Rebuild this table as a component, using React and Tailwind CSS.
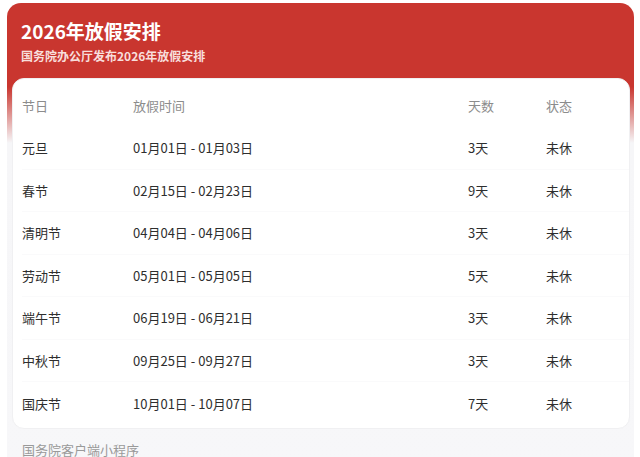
import React from "react";

const rows = [
  ["元旦", "01月01日 - 01月03日", "3天"],
  ["春节", "02月15日 - 02月23日", "9天"],
  ["清明节", "04月04日 - 04月06日", "3天"],
  ["劳动节", "05月01日 - 05月05日", "5天"],
  ["端午节", "06月19日 - 06月21日", "3天"],
  ["中秋节", "09月25日 - 09月27日", "3天"],
  ["国庆节", "10月01日 - 10月07日", "7天"],
];

export default function App() {
  return (
    <div
      className="w-[640px] h-[457px] overflow-hidden bg-white pt-[3px] pl-[7px] pr-[6px]"
      style={{ fontFamily: '"Noto Sans CJK SC", "Noto Sans", sans-serif' }}
    >
      <div className="h-[470px] rounded-[14px] bg-[linear-gradient(to_bottom,#c9362f_0px,#c9362f_84px,#f6f6f8_140px,#f7f7f9_100%)]">
        <div className="pl-[14px] pt-[16px]">
          <div className="text-[19px] leading-[24px] font-bold text-white">2026年放假安排</div>
          <div className="mt-[4px] text-[12px] leading-[18px] font-bold text-[#f8dedc]">
            国务院办公厅发布2026年放假安排
          </div>
        </div>
        <div className="mx-[5px] mr-[4px] mt-[13px] rounded-[12px] bg-white border border-[#f0f0f2] pt-[5px] pb-[3px] pl-[9px]">
          <div className="flex h-[43px] items-center text-[13px] text-[#8c8c8c]">
            <div className="w-[111px]">节日</div>
            <div className="w-[335px]">放假时间</div>
            <div className="w-[78px]">天数</div>
            <div>状态</div>
          </div>
          {rows.map((r, i) => (
            <div
              key={r[0]}
              className={
                "flex h-[42.5px] items-center text-[13px] text-[#2e2e2e] " +
                (i < rows.length - 1 ? "border-b border-[#fafafb]" : "")
              }
            >
              <div className="w-[111px]">{r[0]}</div>
              <div className="w-[335px]">{r[1]}</div>
              <div className="w-[78px]">{r[2]}</div>
              <div>未休</div>
            </div>
          ))}
        </div>
        <div className="pl-[15px] mt-[12px] text-[13px] leading-[18px] text-[#9a9a9a]">国务院客户端小程序</div>
      </div>
    </div>
  );
}
